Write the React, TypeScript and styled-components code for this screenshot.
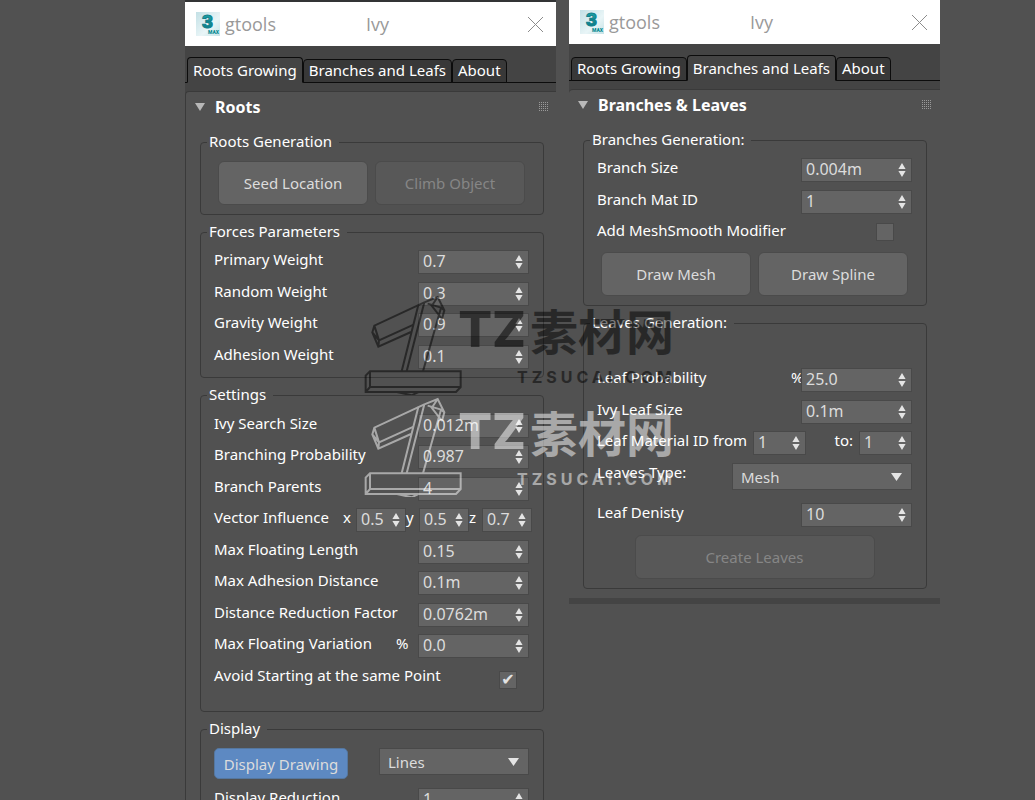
import React, { useId, useState } from "react";
import styled, { createGlobalStyle } from "styled-components";

const color = {
  surface: "#515151",
  strip: "#444444",
  tab: "#383838",
  line: "#3a3a3a",
  field: "#646464",
  fieldEdge: "#494949",
  text: "#ffffff",
  value: "#dcdcdc",
};

const GlobalStyle = createGlobalStyle`
  *, *::before, *::after { box-sizing: border-box; }
  body {
    margin: 0;
    background: ${color.surface};
    color: ${color.text};
    font: 15px/20px "Noto Sans", "Liberation Sans", sans-serif;
  }
  button, input, select { font: inherit; color: inherit; }
`;

const Page = styled.main`
  position: relative;
  display: grid;
  grid-template-columns: 1fr 1fr;
  gap: 13px;
  align-items: start;
  height: 100vh;
  padding: 0 95px 0 185px;
  overflow: hidden;
`;

const Window = styled.section<{ $edge?: boolean }>`
  border-top: ${(p) => (p.$edge ? "2px solid #333435" : "none")};
  padding-bottom: 6px;
  background: ${color.strip};
`;

const TitleBar = styled.header`
  display: flex;
  align-items: center;
  height: 44px;
  padding: 0 12px 0 11px;
  background: #ffffff;
  color: #999999;
  font: 18px/24px "Open Sans", sans-serif;
`;

const AppName = styled.span`
  width: 141px;
  margin-left: 5px;
`;

const WindowTitle = styled.span`
  flex: 1;
`;

const CloseButton = styled.button`
  display: flex;
  padding: 0;
  border: 0;
  background: none;
`;

const Tabs = styled.div`
  display: flex;
  align-items: flex-end;
  height: 37px;
  padding-left: 2px;
  border-bottom: 1px solid #0c0c0c;
`;

const Tab = styled.button<{ $active: boolean }>`
  height: ${(p) => (p.$active ? 26 : 24)}px;
  margin-bottom: -1px;
  padding: 0 5px ${(p) => (p.$active ? 0 : 2)}px;
  border: 1px solid #0c0c0c;
  border-bottom-color: ${(p) => (p.$active ? color.strip : "#0c0c0c")};
  border-radius: 4px 4px 0 0;
  background: ${(p) => (p.$active ? color.strip : color.tab)};
  white-space: nowrap;
`;

const Panel = styled.div<{ $edge?: boolean }>`
  margin-top: 8px;
  padding: 0 ${(p) => (p.$edge ? 12 : 13)}px 9px 14px;
  border-top: 1px solid ${color.line};
  border-left: ${(p) => (p.$edge ? `1px solid ${color.line}` : "none")};
  border-radius: 4px 0 0 0;
  background: ${color.surface};
`;

const PanelHeader = styled.div`
  display: flex;
  align-items: center;
  height: 29px;
  margin: 0 -4px 11px -5px;
`;

const PanelTitle = styled.h2`
  flex: 1;
  margin: 0 0 0 10px;
  font-size: 16px;
  line-height: 20px;
  font-weight: 700;
`;

const Groups = styled.div`
  display: flex;
  flex-direction: column;
  gap: 7px;
`;

const Group = styled.fieldset<{ $top: number; $bottom: number }>`
  min-width: 0;
  margin: 0;
  padding: ${(p) => p.$top}px 14px ${(p) => p.$bottom}px 13px;
  border: 1px solid ${color.line};
  border-radius: 4px;
`;

const Legend = styled.legend`
  margin-left: -7px;
  padding: 0 7px 2px 2px;
  line-height: 18px;
`;

const Rows = styled.div<{ $pattern: string }>`
  display: grid;
  grid-auto-rows: ${(p) => p.$pattern};
`;

const Row = styled.div`
  display: flex;
  align-items: flex-start;
`;

const Label = styled.label`
  flex: 1;
  line-height: 18px;
  white-space: nowrap;
`;

const Prefix = styled.label<{ $width: number; $end?: boolean }>`
  width: ${(p) => p.$width}px;
  padding-right: ${(p) => (p.$end ? 6 : 0)}px;
  line-height: 18px;
  text-align: ${(p) => (p.$end ? "right" : "left")};
  white-space: nowrap;
`;

const SpinnerBox = styled.span<{ $width: number }>`
  display: flex;
  align-items: center;
  width: ${(p) => p.$width}px;
  height: 24px;
  padding: 0 5px 0 4px;
  border: 1px solid ${color.fieldEdge};
  background: ${color.field};
  color: ${color.value};
`;

const SpinnerInput = styled.input`
  flex: 1;
  min-width: 0;
  height: 22px;
  padding: 0 0 2px;
  border: 0;
  outline: 0;
  background: none;
  font-size: 16px;
`;

const Stepper = styled.svg`
  flex: none;
`;

const VectorFields = styled.div`
  display: flex;
  margin-right: -3px;
`;

const SelectBox = styled.span<{ $width: number }>`
  display: flex;
  align-items: center;
  width: ${(p) => p.$width}px;
  height: 27px;
  border: 1px solid ${color.fieldEdge};
  background: ${color.field};
  color: ${color.value};
`;

const SelectInput = styled.select`
  flex: 1;
  height: 24px;
  margin-right: -20px;
  padding: 0 20px 0 8px;
  border: 0;
  outline: 0;
  appearance: none;
  background: none;
`;

const SelectArrow = styled.svg`
  margin-right: 9px;
  pointer-events: none;
`;

const Check = styled.input<{ $top: number; $right: number }>`
  display: grid;
  place-items: center;
  width: 18px;
  height: 18px;
  margin: ${(p) => `${p.$top}px ${p.$right}px 0 0`};
  border: 1px solid ${color.fieldEdge};
  appearance: none;
  background: ${color.field};

  &:checked::after {
    content: "✔";
    color: #e2e2e2;
    font: 16px/16px "DejaVu Sans", sans-serif;
  }
`;

const Buttons = styled.div`
  display: flex;
  justify-content: center;
  gap: 7px;
`;

const Button = styled.button<{ $width: number }>`
  width: ${(p) => p.$width}px;
  height: 44px;
  padding: 0;
  border: 1px solid #4b4b4b;
  border-radius: 6px;
  background: ${color.field};
  color: ${color.value};

  &:disabled {
    background: #585858;
    color: #868686;
  }
`;

const ToggleButton = styled.button`
  width: 134px;
  height: 31px;
  margin: 0 auto 0 0;
  padding: 0;
  border: 1px solid #55779f;
  border-radius: 5px;
  background: #5d89c2;
  color: ${color.value};
`;

const Watermarks = styled.div`
  position: absolute;
  inset: 0;
  display: flex;
  flex-direction: column;
  align-items: center;
  justify-content: center;
  padding-bottom: 10px;
  pointer-events: none;
`;

const Watermark = styled.div<{ $tone: string }>`
  display: flex;
  height: 102px;
  color: ${(p) => p.$tone};
  opacity: 0.5;
`;

const WatermarkText = styled.div`
  display: flex;
  flex-direction: column;
  align-items: flex-end;
  width: 216px;
  margin-left: -13px;
  padding-top: 11px;
  white-space: nowrap;
`;

const WatermarkName = styled.div`
  display: flex;
  align-items: center;
  gap: 4px;
  font: 800 50px/50px Inter, sans-serif;
`;

const WatermarkHan = styled.span`
  font: 700 48px/50px "Noto Sans CJK SC", sans-serif;
`;

const WatermarkSite = styled.div`
  margin: 13px -2px 0 0;
  font: 700 16px/20px Inter, sans-serif;
  letter-spacing: 4px;
`;

function AppIcon() {
  return (
    <svg width="24" height="24" viewBox="0 0 24 24" aria-hidden="true">
      <defs>
        <linearGradient id="icon-back" x1="0" y1="0" x2="1" y2="1">
          <stop offset="0" stopColor="#c3e0e5" />
          <stop offset="0.6" stopColor="#e9f5f7" />
          <stop offset="1" stopColor="#c6e2e6" />
        </linearGradient>
        <linearGradient id="icon-digit" x1="0" y1="0" x2="0" y2="1">
          <stop offset="0" stopColor="#1fb0b4" />
          <stop offset="1" stopColor="#0b6f7d" />
        </linearGradient>
      </defs>
      <rect width="24" height="24" fill="url(#icon-back)" />
      <text x="6" y="16" fill="url(#icon-digit)" stroke="#13828c" fontFamily="Roboto, sans-serif" fontWeight="900" fontSize="19">
        3
      </text>
      <text x="12" y="22" fill="#0a8c94" fontFamily="Roboto, sans-serif" fontWeight="900" fontSize="5">
        MAX
      </text>
    </svg>
  );
}

function Grip() {
  return (
    <svg width="9" height="9" viewBox="0 0 9 9" fill="#9a9a9a" shapeRendering="crispEdges" aria-hidden="true">
      {[0, 2, 4, 6, 8].flatMap((y) =>
        [0, 2, 4, 6, 8].map((x) => <rect key={`${x}-${y}`} x={x} y={y} width="1" height="1" />),
      )}
    </svg>
  );
}

function Spinner({ id, value, width = 111 }: { id: string; value: string; width?: number }) {
  return (
    <SpinnerBox $width={width}>
      <SpinnerInput id={id} type="text" defaultValue={value} />
      <Stepper width="8" height="16" viewBox="0 0 8 16" fill="#e4e4e4" aria-hidden="true">
        <path d="M4 1 7.6 7H.4zM4 15 7.6 9H.4z" />
      </Stepper>
    </SpinnerBox>
  );
}

function Select({ id, value, options, width, label }: { id?: string; value: string; options: string[]; width: number; label?: string }) {
  return (
    <SelectBox $width={width}>
      <SelectInput id={id} defaultValue={value} aria-label={label}>
        {options.map((o) => (
          <option key={o}>{o}</option>
        ))}
      </SelectInput>
      <SelectArrow width="11" height="8" viewBox="0 0 11 8" fill="#e4e4e4" aria-hidden="true">
        <path d="M0 0h11L5.5 8z" />
      </SelectArrow>
    </SelectBox>
  );
}

function SpinnerRow({ label, value, prefix, prefixWidth = 22 }: { label: string; value: string; prefix?: string; prefixWidth?: number }) {
  const id = useId();
  return (
    <Row>
      <Label htmlFor={id}>{label}</Label>
      {prefix && (
        <Prefix htmlFor={id} $width={prefixWidth}>
          {prefix}
        </Prefix>
      )}
      <Spinner id={id} value={value} />
    </Row>
  );
}

function ToolWindow({
  title,
  active,
  edge,
  children,
}: {
  title: string;
  active: string;
  edge?: boolean;
  children: React.ReactNode;
}) {
  const [current, setCurrent] = useState(active);
  return (
    <Window $edge={edge}>
      <TitleBar>
        <AppIcon />
        <AppName>gtools</AppName>
        <WindowTitle>Ivy</WindowTitle>
        <CloseButton aria-label="Close">
          <svg width="17" height="17" viewBox="0 0 17 17" stroke="#8c8c8c" fill="none">
            <path d="M1 1 16 16M16 1 1 16" />
          </svg>
        </CloseButton>
      </TitleBar>
      <Tabs role="tablist">
        {["Roots Growing", "Branches and Leafs", "About"].map((name) => (
          <Tab key={name} role="tab" aria-selected={name === current} $active={name === current} onClick={() => setCurrent(name)}>
            {name}
          </Tab>
        ))}
      </Tabs>
      <Panel $edge={edge}>
        <PanelHeader>
          <svg width="10" height="8" viewBox="0 0 10 8" fill="#b8b8b8" aria-hidden="true">
            <path d="M0 0h10L5 8z" />
          </svg>
          <PanelTitle>{title}</PanelTitle>
          <Grip />
        </PanelHeader>
        <Groups>{children}</Groups>
      </Panel>
    </Window>
  );
}

function BrandMark({ tone }: { tone: string }) {
  return (
    <Watermark $tone={tone}>
      <svg width="110" height="102" viewBox="0 0 330 306" fill="none" stroke="currentColor" strokeWidth="6" aria-hidden="true">
        <path d="M27 235H299V282L285 297H14V248zM14 297 27 282H299M27 235V282M108 297 152 307 172 297" />
        <path d="M190 28 40 98 34 118 52 161 150 117M40 98 54 142 158 95M34 118 54 142 52 161" />
        <path d="M172 36 122 235M190 28 137 235M240 44 186 235M190 28 230 12 250 52 243 78M200 32 240 44 250 52M230 12 214 36M209 34 243 78" />
      </svg>
      <WatermarkText>
        <WatermarkName>
          TZ<WatermarkHan lang="zh">素材网</WatermarkHan>
        </WatermarkName>
        <WatermarkSite>TZSUCAI.COM</WatermarkSite>
      </WatermarkText>
    </Watermark>
  );
}

export default function App() {
  return (
    <>
      <GlobalStyle />
      <Page>
        <ToolWindow title="Roots" active="Roots Growing" edge>
          <Group $top={9} $bottom={9}>
            <Legend>Roots Generation</Legend>
            <Buttons>
              <Button $width={150}>Seed Location</Button>
              <Button $width={150} disabled>
                Climb Object
              </Button>
            </Buttons>
          </Group>
          <Group $top={8} $bottom={1}>
            <Legend>Forces Parameters</Legend>
            <Rows $pattern="32px 31px">
              <SpinnerRow label="Primary Weight" value="0.7" />
              <SpinnerRow label="Random Weight" value="0.3" />
              <SpinnerRow label="Gravity Weight" value="0.9" />
              <SpinnerRow label="Adhesion Weight" value="0.1" />
            </Rows>
          </Group>
          <Group $top={9} $bottom={14}>
            <Legend>Settings</Legend>
            <Rows $pattern="31px 32px">
              <SpinnerRow label="Ivy Search Size" value="0.012m" />
              <SpinnerRow label="Branching Probability" value="0.987" />
              <SpinnerRow label="Branch Parents" value="4" />
              <Row>
                <Label as="span">Vector Influence</Label>
                <VectorFields>
                  <Prefix htmlFor="vec-x" $width={13}>x</Prefix>
                  <Spinner id="vec-x" value="0.5" width={50} />
                  <Prefix htmlFor="vec-y" $width={13}>y</Prefix>
                  <Spinner id="vec-y" value="0.5" width={50} />
                  <Prefix htmlFor="vec-z" $width={13}>z</Prefix>
                  <Spinner id="vec-z" value="0.7" width={50} />
                </VectorFields>
              </Row>
              <SpinnerRow label="Max Floating Length" value="0.15" />
              <SpinnerRow label="Max Adhesion Distance" value="0.1m" />
              <SpinnerRow label="Distance Reduction Factor" value="0.0762m" />
              <SpinnerRow label="Max Floating Variation" value="0.0" prefix="%" />
              <Row>
                <Label htmlFor="avoid">Avoid Starting at the same Point</Label>
                <Check id="avoid" type="checkbox" defaultChecked $top={5} $right={12} />
              </Row>
            </Rows>
          </Group>
          <Group $top={9} $bottom={9}>
            <Legend>Display</Legend>
            <Rows $pattern="40px 32px">
              <Row>
                <ToggleButton aria-pressed="true">Display Drawing</ToggleButton>
                <Select width={150} value="Lines" options={["Lines", "Mesh"]} label="Display mode" />
              </Row>
              <SpinnerRow label="Display Reduction" value="1" />
            </Rows>
          </Group>
        </ToolWindow>

        <ToolWindow title="Branches & Leaves" active="Branches and Leafs">
          <Group $top={8} $bottom={9}>
            <Legend>Branches Generation:</Legend>
            <Rows $pattern="32px 31px 31px">
              <SpinnerRow label="Branch Size" value="0.004m" />
              <SpinnerRow label="Branch Mat ID" value="1" />
              <Row>
                <Label htmlFor="smooth">Add MeshSmooth Modifier</Label>
                <Check id="smooth" type="checkbox" $top={2} $right={18} />
              </Row>
            </Rows>
            <Buttons>
              <Button $width={150}>Draw Mesh</Button>
              <Button $width={150}>Draw Spline</Button>
            </Buttons>
          </Group>
          <Group $top={35} $bottom={9}>
            <Legend>Leaves Generation:</Legend>
            <Rows $pattern="32px 31px 32px 40px 32px">
              <SpinnerRow label="Leaf Probability" value="25.0" prefix="%" prefixWidth={10} />
              <SpinnerRow label="Ivy Leaf Size" value="0.1m" />
              <Row>
                <Label htmlFor="mat-from">Leaf Material ID from</Label>
                <Spinner id="mat-from" value="1" width={53} />
                <Prefix htmlFor="mat-to" $width={53} $end>
                  to:
                </Prefix>
                <Spinner id="mat-to" value="1" width={53} />
              </Row>
              <Row>
                <Label htmlFor="leaf-type">Leaves Type:</Label>
                <Select id="leaf-type" width={180} value="Mesh" options={["Mesh", "Plane"]} />
              </Row>
              <SpinnerRow label="Leaf Denisty" value="10" />
            </Rows>
            <Buttons>
              <Button $width={240} disabled>
                Create Leaves
              </Button>
            </Buttons>
          </Group>
        </ToolWindow>

        <Watermarks aria-hidden="true">
          <BrandMark tone="#000000" />
          <BrandMark tone="#ffffff" />
        </Watermarks>
      </Page>
    </>
  );
}
